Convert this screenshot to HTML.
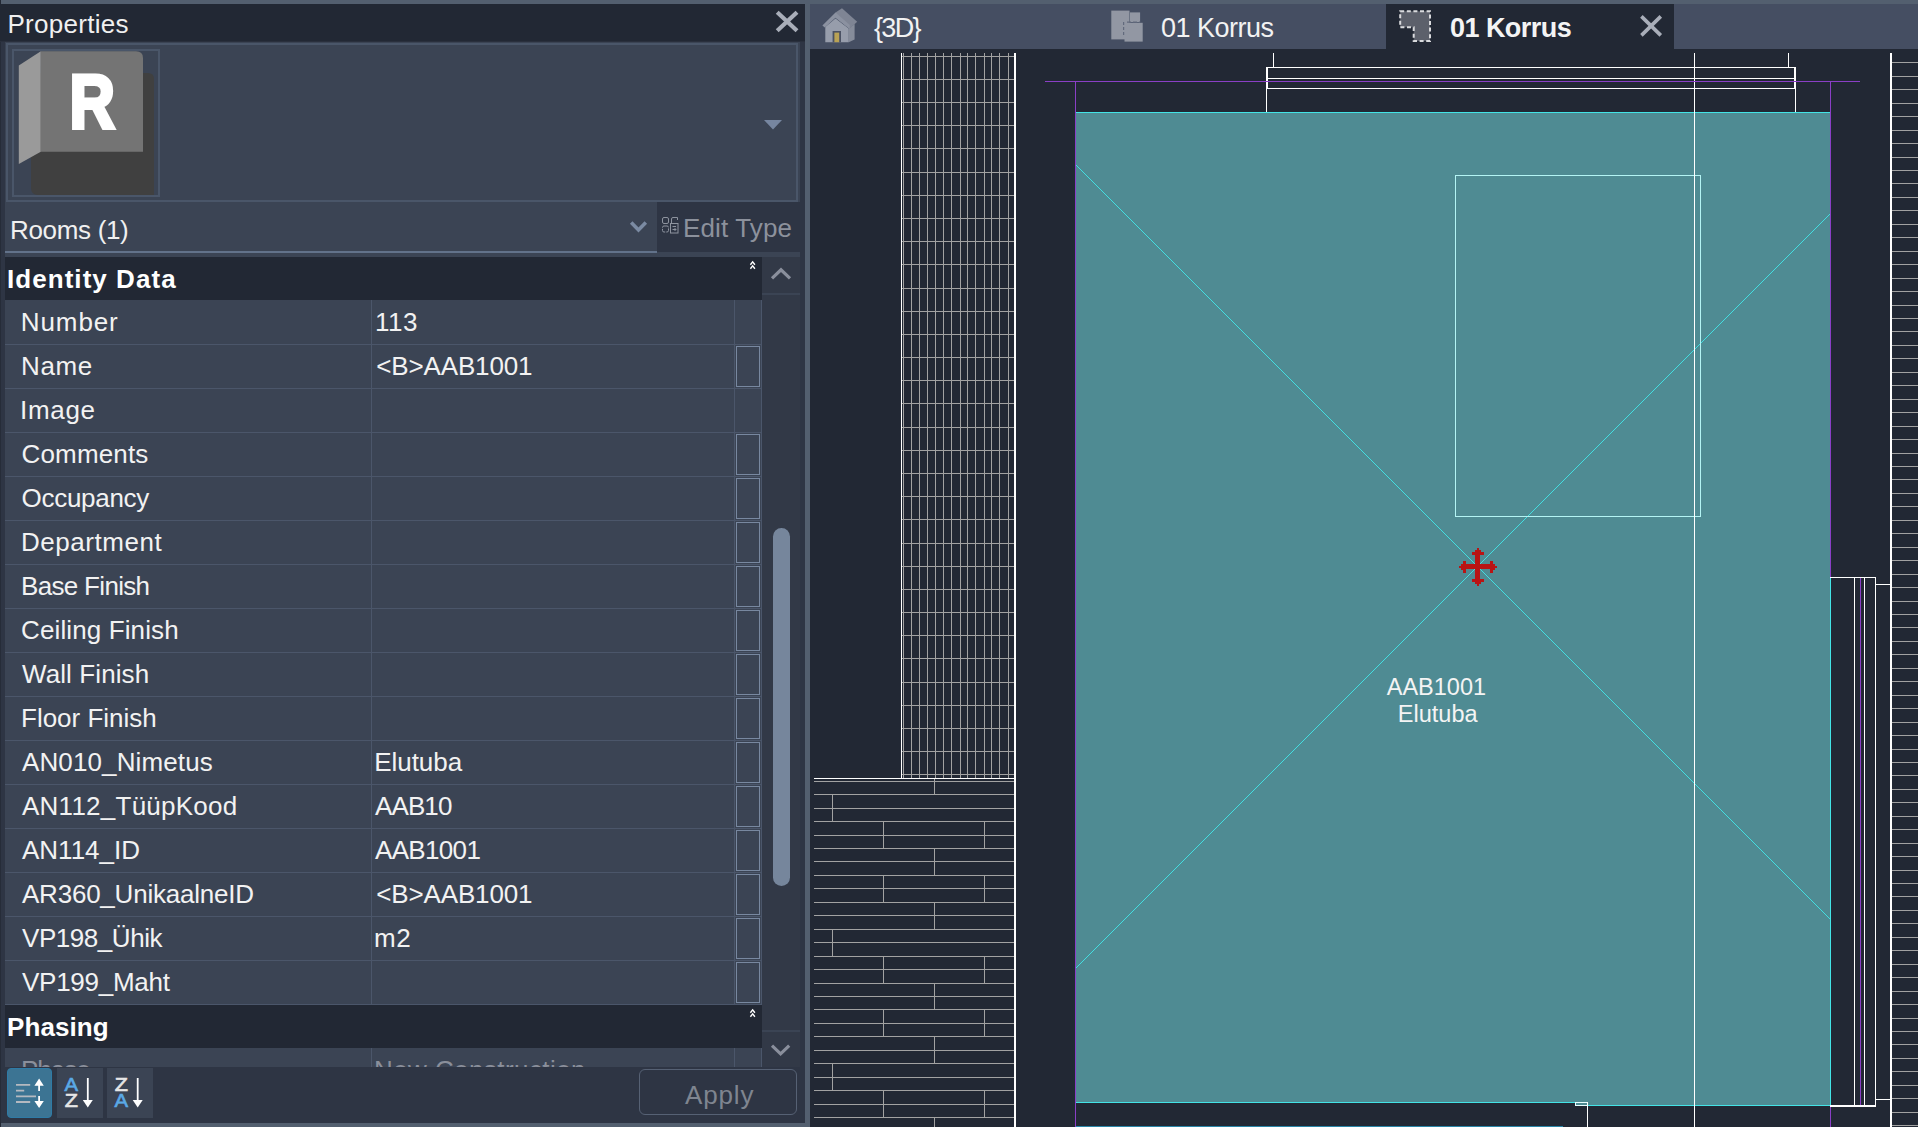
<!DOCTYPE html>
<html lang="en"><head><meta charset="utf-8"><title>Properties - 01 Korrus</title>
<style>
html,body{margin:0;padding:0;overflow:hidden}
body{width:1918px;height:1127px;overflow:hidden;position:relative;background:#222834;font-family:"Liberation Sans",sans-serif}
div,span.t,svg{position:absolute}
span.t{white-space:pre;line-height:1}
</style></head><body>

<div style="left:1px;top:0px;width:1917px;height:4px;background:#535f6f;"></div>
<div style="left:805px;top:4px;width:5px;height:1123px;background:#535f6f;"></div>
<div style="left:1px;top:1123px;width:809px;height:4px;background:#535f6f;"></div>
<div style="left:0px;top:4px;width:805px;height:37px;background:#222834;"></div>
<div style="left:0px;top:41px;width:805px;height:1px;background:#2a303d;"></div>
<div style="left:0px;top:42px;width:1px;height:1080px;background:#262c38;"></div>
<div style="left:1px;top:42px;width:4px;height:1080px;background:#2e3544;"></div>
<div style="left:5px;top:42px;width:795px;height:1025px;background:#3b4454;"></div>
<div style="left:800px;top:42px;width:5px;height:1080px;background:#2e3544;"></div>
<span class="t" id="x1" style="left:7.4px;top:10.59px;font-size:26px;color:#f0f0f0;font-weight:400;letter-spacing:0.289px;">Properties</span>
<svg style="left:774px;top:9px" width="26" height="26" viewBox="0 0 26 26"><path d="M3.2 3.2L23 21.8M23 3.2L3.2 21.8" stroke="#a9aeb9" stroke-width="4.2" fill="none"/></svg>
<div style="left:6px;top:43px;width:792px;height:159px;background:transparent;box-sizing:border-box;border:2px solid #4a5669"></div>
<div style="left:12px;top:49px;width:148px;height:148px;background:transparent;box-sizing:border-box;border:2px solid #4a5669"></div>
<svg style="left:14px;top:51px" width="144" height="144" viewBox="14 51 144 144">
<path d="M36 73 H148 Q154 73 154 79 V195 H38 Q31 195 31 188 V156 Z" fill="#404040"/>
<path d="M18.8 65.5 L40.8 51.3 V151.8 L18.8 164 Z" fill="#9a9a9a"/>
<path d="M40.8 51.3 H136 Q143 51.3 143 58 V151.8 H40.8 Z" fill="#747474"/>
<text x="69.4" y="127.9" font-family="Liberation Sans, sans-serif" font-weight="700" font-size="76.2" fill="#ffffff" stroke="#ffffff" stroke-width="4" stroke-linejoin="miter" textLength="45.4" lengthAdjust="spacingAndGlyphs">R</text>
</svg>
<svg style="left:762px;top:118px" width="22" height="14" viewBox="762 118 22 14"><path d="M764 120 H782 L773 129.5 Z" fill="#7686a0"/></svg>
<span class="t" id="x2" style="left:10.0px;top:216.69px;font-size:26px;color:#f0f0f0;font-weight:400;letter-spacing:-0.325px;">Rooms (1)</span>
<div style="left:5px;top:251px;width:652px;height:2px;background:#62728a;"></div>
<svg style="left:628px;top:219px" width="22" height="16" viewBox="628 219 22 16"><path d="M631.2 222.6 L638.5 229.9 L645.8 222.6" stroke="#7b8ba3" stroke-width="3.6" fill="none"/></svg>
<div style="left:657px;top:202px;width:148px;height:50px;background:#2e3544;"></div>
<svg style="left:660px;top:215px" width="20" height="20" viewBox="660 215 20 20" fill="none" stroke="#8d939e" stroke-width="1">
<rect x="662.5" y="217.5" width="6" height="6" rx="1.5"/><path d="M671.5 223.5 V219 Q671.5 217.5 673 217.5 H677.5 V220"/>
<rect x="662.5" y="226" width="6" height="6" rx="1.5" stroke-dasharray="5 1"/>
<rect x="670.5" y="223.5" width="7.5" height="9.5"/><path d="M672.5 226.5 H676 M672.5 229.5 H676 M674.5 228 L676 229.5 L674.5 231" />
</svg>
<span class="t" id="x3" style="left:683.0px;top:215.19px;font-size:26px;color:#8c919c;font-weight:400;letter-spacing:0.126px;">Edit Type</span>
<div style="left:5px;top:257px;width:757px;height:43px;background:#222834;"></div>
<span class="t" id="x4" style="left:7.0px;top:265.99px;font-size:26px;color:#ffffff;font-weight:700;letter-spacing:1.050px;">Identity Data</span>
<svg style="left:748px;top:260px" width="10" height="11" viewBox="0 0 10 11"><path d="M2.4 4.7 L4.65 1.8 L6.9 4.7 M2.4 8.7 L4.65 5.8 L6.9 8.7" stroke="#ffffff" stroke-width="1.4" fill="none"/></svg>
<span class="t" id="x5" style="left:20.8px;top:308.99px;font-size:26px;color:#f2f2f2;font-weight:400;letter-spacing:0.900px;">Number</span>
<span class="t" id="x6" style="left:375.0px;top:308.99px;font-size:26px;color:#f2f2f2;font-weight:400;letter-spacing:0.550px;">113</span>
<div style="left:5px;top:344px;width:757px;height:1px;background:#4b566a;"></div>
<span class="t" id="x7" style="left:21.0px;top:352.99px;font-size:26px;color:#f2f2f2;font-weight:400;letter-spacing:0.600px;">Name</span>
<span class="t" id="x8" style="left:376.2px;top:352.99px;font-size:26px;color:#f2f2f2;font-weight:400;letter-spacing:-0.133px;">&lt;B&gt;AAB1001</span>
<div style="left:5px;top:388px;width:757px;height:1px;background:#4b566a;"></div>
<div style="left:736px;top:346px;width:24px;height:41px;background:transparent;box-sizing:border-box;border:1px solid #7888a0"></div>
<span class="t" id="x9" style="left:20.0px;top:396.99px;font-size:26px;color:#f2f2f2;font-weight:400;letter-spacing:0.700px;">Image</span>
<div style="left:5px;top:432px;width:757px;height:1px;background:#4b566a;"></div>
<span class="t" id="x10" style="left:21.6px;top:440.99px;font-size:26px;color:#f2f2f2;font-weight:400;letter-spacing:0.143px;">Comments</span>
<div style="left:5px;top:476px;width:757px;height:1px;background:#4b566a;"></div>
<div style="left:736px;top:434px;width:24px;height:41px;background:transparent;box-sizing:border-box;border:1px solid #7888a0"></div>
<span class="t" id="x11" style="left:21.6px;top:484.99px;font-size:26px;color:#f2f2f2;font-weight:400;letter-spacing:-0.300px;">Occupancy</span>
<div style="left:5px;top:520px;width:757px;height:1px;background:#4b566a;"></div>
<div style="left:736px;top:478px;width:24px;height:41px;background:transparent;box-sizing:border-box;border:1px solid #7888a0"></div>
<span class="t" id="x12" style="left:21.0px;top:528.99px;font-size:26px;color:#f2f2f2;font-weight:400;letter-spacing:0.533px;">Department</span>
<div style="left:5px;top:564px;width:757px;height:1px;background:#4b566a;"></div>
<div style="left:736px;top:522px;width:24px;height:41px;background:transparent;box-sizing:border-box;border:1px solid #7888a0"></div>
<span class="t" id="x13" style="left:21.0px;top:572.99px;font-size:26px;color:#f2f2f2;font-weight:400;letter-spacing:-0.680px;">Base Finish</span>
<div style="left:5px;top:608px;width:757px;height:1px;background:#4b566a;"></div>
<div style="left:736px;top:566px;width:24px;height:41px;background:transparent;box-sizing:border-box;border:1px solid #7888a0"></div>
<span class="t" id="x14" style="left:21.0px;top:616.99px;font-size:26px;color:#f2f2f2;font-weight:400;letter-spacing:0.123px;">Ceiling Finish</span>
<div style="left:5px;top:652px;width:757px;height:1px;background:#4b566a;"></div>
<div style="left:736px;top:610px;width:24px;height:41px;background:transparent;box-sizing:border-box;border:1px solid #7888a0"></div>
<span class="t" id="x15" style="left:22.0px;top:660.99px;font-size:26px;color:#f2f2f2;font-weight:400;letter-spacing:0.100px;">Wall Finish</span>
<div style="left:5px;top:696px;width:757px;height:1px;background:#4b566a;"></div>
<div style="left:736px;top:654px;width:24px;height:41px;background:transparent;box-sizing:border-box;border:1px solid #7888a0"></div>
<span class="t" id="x16" style="left:21.0px;top:704.99px;font-size:26px;color:#f2f2f2;font-weight:400;letter-spacing:0.000px;">Floor Finish</span>
<div style="left:5px;top:740px;width:757px;height:1px;background:#4b566a;"></div>
<div style="left:736px;top:698px;width:24px;height:41px;background:transparent;box-sizing:border-box;border:1px solid #7888a0"></div>
<span class="t" id="x17" style="left:22.0px;top:748.99px;font-size:26px;color:#f2f2f2;font-weight:400;letter-spacing:0.116px;">AN010_Nimetus</span>
<span class="t" id="x18" style="left:374.2px;top:748.99px;font-size:26px;color:#f2f2f2;font-weight:400;letter-spacing:-0.034px;">Elutuba</span>
<div style="left:5px;top:784px;width:757px;height:1px;background:#4b566a;"></div>
<div style="left:736px;top:742px;width:24px;height:41px;background:transparent;box-sizing:border-box;border:1px solid #7888a0"></div>
<span class="t" id="x19" style="left:22.0px;top:792.99px;font-size:26px;color:#f2f2f2;font-weight:400;letter-spacing:0.246px;">AN112_TüüpKood</span>
<span class="t" id="x20" style="left:375.0px;top:792.99px;font-size:26px;color:#f2f2f2;font-weight:400;letter-spacing:-0.900px;">AAB10</span>
<div style="left:5px;top:828px;width:757px;height:1px;background:#4b566a;"></div>
<div style="left:736px;top:786px;width:24px;height:41px;background:transparent;box-sizing:border-box;border:1px solid #7888a0"></div>
<span class="t" id="x21" style="left:22.0px;top:836.99px;font-size:26px;color:#f2f2f2;font-weight:400;letter-spacing:0.000px;">AN114_ID</span>
<span class="t" id="x22" style="left:375.0px;top:836.99px;font-size:26px;color:#f2f2f2;font-weight:400;letter-spacing:-0.667px;">AAB1001</span>
<div style="left:5px;top:872px;width:757px;height:1px;background:#4b566a;"></div>
<div style="left:736px;top:830px;width:24px;height:41px;background:transparent;box-sizing:border-box;border:1px solid #7888a0"></div>
<span class="t" id="x23" style="left:22.0px;top:880.99px;font-size:26px;color:#f2f2f2;font-weight:400;letter-spacing:-0.225px;">AR360_UnikaalneID</span>
<span class="t" id="x24" style="left:376.2px;top:880.99px;font-size:26px;color:#f2f2f2;font-weight:400;letter-spacing:-0.133px;">&lt;B&gt;AAB1001</span>
<div style="left:5px;top:916px;width:757px;height:1px;background:#4b566a;"></div>
<div style="left:736px;top:874px;width:24px;height:41px;background:transparent;box-sizing:border-box;border:1px solid #7888a0"></div>
<span class="t" id="x25" style="left:22.0px;top:924.99px;font-size:26px;color:#f2f2f2;font-weight:400;letter-spacing:-0.445px;">VP198_Ühik</span>
<span class="t" id="x26" style="left:374px;top:924.99px;font-size:26px;color:#f2f2f2;font-weight:400;letter-spacing:0.700px;">m2</span>
<div style="left:5px;top:960px;width:757px;height:1px;background:#4b566a;"></div>
<div style="left:736px;top:918px;width:24px;height:41px;background:transparent;box-sizing:border-box;border:1px solid #7888a0"></div>
<span class="t" id="x27" style="left:22.0px;top:968.99px;font-size:26px;color:#f2f2f2;font-weight:400;letter-spacing:-0.267px;">VP199_Maht</span>
<div style="left:5px;top:1004px;width:757px;height:1px;background:#4b566a;"></div>
<div style="left:736px;top:962px;width:24px;height:41px;background:transparent;box-sizing:border-box;border:1px solid #7888a0"></div>
<div style="left:371px;top:300px;width:1px;height:704px;background:#4b566a;"></div>
<div style="left:734px;top:300px;width:1px;height:704px;background:#4b566a;"></div>
<div style="left:761px;top:300px;width:1px;height:704px;background:#4b566a;"></div>
<div style="left:5px;top:1005px;width:757px;height:43px;background:#222834;"></div>
<span class="t" id="x28" style="left:7.0px;top:1013.99px;font-size:26px;color:#ffffff;font-weight:700;letter-spacing:0.100px;">Phasing</span>
<svg style="left:748px;top:1008px" width="10" height="11" viewBox="0 0 10 11"><path d="M2.4 4.7 L4.65 1.8 L6.9 4.7 M2.4 8.7 L4.65 5.8 L6.9 8.7" stroke="#ffffff" stroke-width="1.4" fill="none"/></svg>
<div style="left:5px;top:1048px;width:757px;height:19px;overflow:hidden">
<div style="left:366px;top:0;width:1px;height:19px;background:#4b566a"></div><div style="left:729px;top:0;width:1px;height:19px;background:#4b566a"></div><div style="left:756px;top:0;width:1px;height:19px;background:#4b566a"></div>
<span class="t" id="x29" style="left:16px;top:8.99px;font-size:26px;color:#8a8f9b;font-weight:400;letter-spacing:-1.000px;">Phase</span>
<span class="t" id="x30" style="left:369px;top:8.99px;font-size:26px;color:#8a8f9b;font-weight:400;letter-spacing:0.420px;">New Construction</span>
</div>
<div style="left:762px;top:257px;width:38px;height:810px;background:#323947;"></div>
<div style="left:762px;top:293px;width:38px;height:2px;background:#3b4454;"></div>
<div style="left:762px;top:1030px;width:38px;height:2px;background:#3b4454;"></div>
<svg style="left:768px;top:265px" width="26" height="18" viewBox="768 265 26 18"><path d="M772 278.3 L781 269.8 L790 278.3" stroke="#8a8f9c" stroke-width="3.2" fill="none"/></svg>
<svg style="left:768px;top:1041px" width="26" height="18" viewBox="768 1041 26 18"><path d="M772 1045.7 L780.6 1053.8 L789.2 1045.7" stroke="#8a8f9c" stroke-width="3.2" fill="none"/></svg>
<div style="left:773px;top:528px;width:17px;height:358px;background:#76869c;border-radius:8.5px"></div>
<div style="left:1px;top:1067px;width:804px;height:56px;background:#2e3544;"></div>
<div style="left:7px;top:1068px;width:45px;height:50px;background:#3c7493;box-sizing:border-box;border:1px solid #2e7ba6;border-radius:4px"></div>
<div style="left:57px;top:1068px;width:46px;height:50px;background:#3b4454;"></div>
<div style="left:107px;top:1068px;width:46px;height:50px;background:#3b4454;"></div>
<svg style="left:7px;top:1068px" width="150" height="50" viewBox="7 1068 150 50">
<g stroke="#b5b9c0" stroke-width="1.8"><path d="M16 1084.8 H30.2 M16 1090.6 H24.2 M16 1096.3 H36 M16 1102 H30.2"/></g>
<g stroke="#ffffff" stroke-width="1.8" fill="#ffffff"><path d="M39.1 1082 V1091"/><path d="M39.1 1096 V1104"/></g>
<path d="M34.4 1085.8 L39.1 1078.6 L43.8 1085.8 Z M34.4 1101 L39.1 1108 L43.8 1101 Z" fill="#ffffff"/>
<text x="64.6" y="1090.8" font-family="Liberation Sans, sans-serif" font-size="17.5" stroke="#5aa9e6" stroke-width="0.6" fill="#5aa9e6" textLength="13.6" lengthAdjust="spacingAndGlyphs">A</text>
<text x="64.8" y="1107" font-family="Liberation Sans, sans-serif" font-size="17.5" stroke="#e6e6e6" stroke-width="0.6" fill="#e6e6e6" textLength="13.2" lengthAdjust="spacingAndGlyphs">Z</text>
<path d="M87.8 1078 V1102" stroke="#ffffff" stroke-width="1.8"/><path d="M82.8 1100 H92.8 L87.8 1107.6 Z" fill="#ffffff"/>
<text x="114.8" y="1090.8" font-family="Liberation Sans, sans-serif" font-size="17.5" stroke="#e6e6e6" stroke-width="0.6" fill="#e6e6e6" textLength="13.2" lengthAdjust="spacingAndGlyphs">Z</text>
<text x="114.6" y="1107" font-family="Liberation Sans, sans-serif" font-size="17.5" stroke="#5aa9e6" stroke-width="0.6" fill="#5aa9e6" textLength="13.6" lengthAdjust="spacingAndGlyphs">A</text>
<path d="M137.7 1078 V1102" stroke="#ffffff" stroke-width="1.8"/><path d="M132.7 1100 H142.7 L137.7 1107.6 Z" fill="#ffffff"/>
</svg>
<div style="left:639px;top:1069px;width:158px;height:46px;background:transparent;box-sizing:border-box;border:1px solid #566174;border-radius:6px"></div>
<span class="t" id="x31" style="left:685.0px;top:1081.59px;font-size:26px;color:#7f8590;font-weight:400;letter-spacing:0.850px;">Apply</span>
<div style="left:810px;top:4px;width:1108px;height:45px;background:#454e62;"></div>
<div style="left:1386px;top:4px;width:288px;height:45px;background:#222834;"></div>
<svg style="left:820px;top:6px" width="40" height="40" viewBox="820 6 40 40">
<path d="M848.7 28.5 L854.6 24 V39.4 L848.7 42.2 Z" fill="#868c9a"/>
<path d="M825.3 27 L835.5 18.5 L848.7 28.6 V42.2 H825.3 Z" fill="#979dab"/>
<path d="M835.5 12.6 L842 8.2 L857.2 21.8 L849.5 28.8 L835.5 17.6 Z" fill="#7f8594"/>
<path d="M822.4 25.4 L835.5 12.6 L849.8 25 L849.5 28.8 L835.5 17.8 L824.8 27.6 Z" fill="#8b91a0"/>
<rect x="832.6" y="31" width="8.4" height="11.2" fill="#4a5163"/><rect x="834.4" y="32.6" width="4.8" height="9.6" fill="#b9a254"/>
</svg>
<span class="t" id="x32" style="left:874.0px;top:14.94px;font-size:27px;color:#f2f2f2;font-weight:400;letter-spacing:-1.667px;">{3D}</span>
<svg style="left:1110px;top:8px" width="36" height="36" viewBox="1110 8 36 36">
<rect x="1111.3" y="10.6" width="18.2" height="28.8" fill="#9297a3"/><rect x="1130" y="12.4" width="10.1" height="9.7" fill="#9297a3"/>
<rect x="1124.5" y="22.8" width="18.2" height="18.8" fill="#9297a3"/>
<path d="M1123.6 22 V36 " stroke="#626a7c" stroke-width="1.2" stroke-dasharray="3 2"/><path d="M1127 22.2 H1140" stroke="#626a7c" stroke-width="1.2" stroke-dasharray="4 2"/>
</svg>
<span class="t" id="x33" style="left:1161.0px;top:14.94px;font-size:27px;color:#f2f2f2;font-weight:400;letter-spacing:-0.500px;">01 Korrus</span>
<svg style="left:1397px;top:8px" width="36" height="36" viewBox="1397 8 36 36">
<path d="M1400.2 11.2 H1430 V41 H1413.7 V27.2 H1400.2 Z" fill="#5c606b" stroke="#d9dadd" stroke-width="2" stroke-dasharray="4 2.6"/>
</svg>
<span class="t" id="x34" style="left:1450.0px;top:14.94px;font-size:27px;color:#f4f4f4;font-weight:700;letter-spacing:-0.550px;">01 Korrus</span>
<svg style="left:1638px;top:13px" width="26" height="26" viewBox="1638 13 26 26"><path d="M1641.4 16.4 L1660.8 35.4 M1660.8 16.4 L1641.4 35.4" stroke="#a9aeb9" stroke-width="3.6" fill="none"/></svg>
<svg style="left:810px;top:49px" width="1108" height="1078" viewBox="810 49 1108 1078" shape-rendering="crispEdges">
<path d="M1075.5 112.5 H1830.5 V1105.5 H1575.5 V1102.5 H1075.5 Z" fill="#4f8b93" stroke="#43e4e6" stroke-width="1"/>
<path d="M1076 165 L1830 919 M1076 968 L1830 214" stroke="#43e4e6" stroke-width="0.72" fill="none"/>
<path d="M1076 165 L1830 919 M1076 968 L1830 214" stroke="#43e4e6" stroke-width="0.72" fill="none"/>
<rect x="1455.5" y="175.5" width="245" height="341" fill="none" stroke="#b4f4f4" stroke-width="1"/>
<path d="M1694.5 53 V1127" stroke="#ffffff" stroke-width="1"/>
<g stroke="#ffffff" fill="none"><path d="M1273.5 53 V67 M1788.5 53 V67" stroke-width="1"/><path d="M1267 67.5 H1795 M1267 78.5 H1795 M1267 88.5 H1795" stroke-width="1"/><path d="M1267 67 V89 M1795 67 V89" stroke-width="2"/><path d="M1266.5 89 V112 M1795.5 89 V112" stroke-width="1"/></g>
<path d="M1045 81.5 H1860 M1075.5 81 V1127 M1830.5 81 V577 M1830.5 1106 V1127 M1860.5 578 V1106" stroke="#8a3fc6" stroke-width="1" fill="none"/>
<path d="M903.5 53 V778 M911.5 53 V778 M919.5 53 V778 M927.5 53 V778 M935.5 53 V778 M943.5 53 V778 M951.5 53 V778 M960.5 53 V778 M967.5 53 V778 M975.5 53 V778 M984.5 53 V778 M991.5 53 V778 M999.5 53 V778 M1008.5 53 V778 M902 56.5 H1014 M902 79.5 H1014 M902 102.5 H1014 M902 125.5 H1014 M902 148.5 H1014 M902 172.5 H1014 M902 195.5 H1014 M902 218.5 H1014 M902 241.5 H1014 M902 264.5 H1014 M902 288.5 H1014 M902 311.5 H1014 M902 334.5 H1014 M902 357.5 H1014 M902 380.5 H1014 M902 403.5 H1014 M902 427.5 H1014 M902 450.5 H1014 M902 473.5 H1014 M902 496.5 H1014 M902 519.5 H1014 M902 543.5 H1014 M902 566.5 H1014 M902 589.5 H1014 M902 612.5 H1014 M902 635.5 H1014 M902 658.5 H1014 M902 682.5 H1014 M902 705.5 H1014 M902 728.5 H1014 M902 751.5 H1014 M902 774.5 H1014" stroke="#a2a2a2" stroke-width="1" fill="none"/>
<path d="M901.5 53 V779 M814 778.5 H1015" stroke="#ffffff" stroke-width="1"/><path d="M1015 53 V1127" stroke="#ffffff" stroke-width="2"/>
<path d="M814 781.5 H1014 M814 794.5 H1014 M814 808.5 H1014 M814 821.5 H1014 M814 835.5 H1014 M814 848.5 H1014 M814 861.5 H1014 M814 875.5 H1014 M814 888.5 H1014 M814 902.5 H1014 M814 915.5 H1014 M814 929.5 H1014 M814 942.5 H1014 M814 956.5 H1014 M814 969.5 H1014 M814 983.5 H1014 M814 996.5 H1014 M814 1009.5 H1014 M814 1023.5 H1014 M814 1036.5 H1014 M814 1050.5 H1014 M814 1063.5 H1014 M814 1077.5 H1014 M814 1090.5 H1014 M814 1104.5 H1014 M814 1117.5 H1014 M934.5 779 V794 M832.5 794 V821 M883.5 821 V848 M984.5 821 V848 M934.5 848 V875 M883.5 875 V902 M984.5 875 V902 M934.5 902 V929 M832.5 929 V956 M883.5 956 V983 M984.5 956 V983 M934.5 983 V1009 M883.5 1009 V1036 M984.5 1009 V1036 M934.5 1036 V1063 M832.5 1063 V1090 M883.5 1090 V1117 M984.5 1090 V1117 M934.5 1117 V1127" stroke="#a2a2a2" stroke-width="1" fill="none"/>
<path d="M1892 62.5 H1918 M1892 76.5 H1918 M1892 89.5 H1918 M1892 103.5 H1918 M1892 116.5 H1918 M1892 130.5 H1918 M1892 143.5 H1918 M1892 157.5 H1918 M1892 170.5 H1918 M1892 183.5 H1918 M1892 197.5 H1918 M1892 210.5 H1918 M1892 224.5 H1918 M1892 237.5 H1918 M1892 251.5 H1918 M1892 264.5 H1918 M1892 278.5 H1918 M1892 291.5 H1918 M1892 305.5 H1918 M1892 318.5 H1918 M1892 331.5 H1918 M1892 345.5 H1918 M1892 358.5 H1918 M1892 372.5 H1918 M1892 385.5 H1918 M1892 399.5 H1918 M1892 412.5 H1918 M1892 426.5 H1918 M1892 439.5 H1918 M1892 453.5 H1918 M1892 466.5 H1918 M1892 479.5 H1918 M1892 493.5 H1918 M1892 506.5 H1918 M1892 520.5 H1918 M1892 533.5 H1918 M1892 547.5 H1918 M1892 560.5 H1918 M1892 574.5 H1918 M1892 587.5 H1918 M1892 601.5 H1918 M1892 614.5 H1918 M1892 627.5 H1918 M1892 641.5 H1918 M1892 654.5 H1918 M1892 668.5 H1918 M1892 681.5 H1918 M1892 695.5 H1918 M1892 708.5 H1918 M1892 722.5 H1918 M1892 735.5 H1918 M1892 749.5 H1918 M1892 762.5 H1918 M1892 775.5 H1918 M1892 789.5 H1918 M1892 802.5 H1918 M1892 816.5 H1918 M1892 829.5 H1918 M1892 843.5 H1918 M1892 856.5 H1918 M1892 870.5 H1918 M1892 883.5 H1918 M1892 896.5 H1918 M1892 910.5 H1918 M1892 923.5 H1918 M1892 937.5 H1918 M1892 950.5 H1918 M1892 964.5 H1918 M1892 977.5 H1918 M1892 991.5 H1918 M1892 1004.5 H1918 M1892 1018.5 H1918 M1892 1031.5 H1918 M1892 1044.5 H1918 M1892 1058.5 H1918 M1892 1071.5 H1918 M1892 1085.5 H1918 M1892 1098.5 H1918 M1892 1112.5 H1918 M1892 1125.5 H1918" stroke="#a2a2a2" stroke-width="1" fill="none"/>
<path d="M1891 53 V1127" stroke="#ffffff" stroke-width="2"/>
<g stroke="#ffffff" fill="none"><path d="M1830 577.5 H1876 " stroke-width="1.3"/><path d="M1876 584.5 H1890 M1876 1099.5 H1890" stroke-width="1"/><path d="M1854.5 578 V1105 M1864.5 578 V1105" stroke-width="1"/><path d="M1875.5 577 V1107" stroke-width="1.4"/><path d="M1830 1106 H1876" stroke-width="2"/></g>
<path d="M1830.5 578 V1105" stroke="#43e4e6" stroke-width="1"/>
<path d="M1575.5 1102.5 H1587.5 V1105.5 H1575.5 Z" fill="none" stroke="#e8ffff" stroke-width="1"/><path d="M1587.5 1102 V1127" stroke="#ffffff" stroke-width="1"/>
<path d="M1076 1126.5 H1563" stroke="#2a86a8" stroke-width="1"/>
<path fill="#b91414" d="M1475.2 552 H1480.2 V564.2 H1490 V561.2 H1493 V564.2 H1495 V566 H1497 V568 H1495 V570 H1493 V573 H1490 V569 H1480.2 V579 H1484 V581.5 H1481 V584 H1479 V586 H1477 V584 H1475.2 V581.5 H1472 V579 H1475.2 V569 H1465.8 V573 H1463.2 V570 H1461 V568 H1459 V566 H1461 V564.2 H1463.2 V561.2 H1465.8 V564.2 H1475.2 Z M1472 552.2 H1475.2 V550 H1477 V548 H1479 V550 H1481 V552.2 H1484 V554.8 H1472 Z"/>
<g shape-rendering="geometricPrecision" font-family="Liberation Sans, sans-serif" font-size="23.5" fill="#f4f4f4" text-anchor="middle"><text x="1436.4" y="694.6">AAB1001</text><text x="1437.7" y="721.7">Elutuba</text></g>
</svg>
</body></html>
